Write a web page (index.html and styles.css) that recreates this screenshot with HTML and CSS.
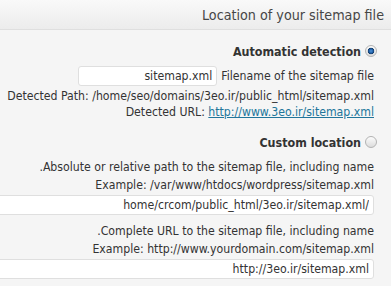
FILE: index.html
```html
<!DOCTYPE html>
<html lang="en" dir="rtl">
<head>
    <meta charset="UTF-8">
    <title>Sitemap location</title>
    <link rel="stylesheet" href="styles.css">
</head>
<body>
    <div class="postbox">
        <h3 class="hndle">Location of your sitemap file</h3>

        <div class="inside">
            <div class="option">
                <label class="option-title"><input type="radio" name="location" checked> Automatic detection</label>
                <div class="input-row">Filename of the sitemap file <input type="text" class="small-text" value="sitemap.xml"></div>
                <div class="row" dir="ltr">Detected Path: /home/seo/domains/3eo.ir/public_html/sitemap.xml</div>
                <div class="row" dir="ltr">Detected URL: <a href="#">http://www.3eo.ir/sitemap.xml</a></div>
            </div>

            <div class="option">
                <label class="option-title"><input type="radio" name="location"> Custom location</label>
                <div class="desc">Absolute or relative path to the sitemap file, including name.</div>
                <div class="desc">Example: /var/www/htdocs/wordpress/sitemap.xml</div>
                <input type="text" class="wide" value="/home/crcom/public_html/3eo.ir/sitemap.xml">

                <div class="desc spaced">Complete URL to the sitemap file, including name.</div>
                <div class="desc">Example: http://www.yourdomain.com/sitemap.xml</div>
                <input type="text" class="wide" value="http://3eo.ir/sitemap.xml">
            </div>
        </div>
    </div>
</body>
</html>
```

FILE: styles.css
```css
body {
    margin: 0;
    overflow: hidden;
    background-color: #f5f5f5;
    font-family: "DejaVu Sans Condensed", "DejaVu Sans", sans-serif;
    font-size: 12.2px;
    color: #333;
}

.postbox {
    direction: rtl;
}

.hndle {
    margin: 0;
    height: 29px;
    line-height: 30px;
    padding: 0 7px;
    font-size: 14.2px;
    font-weight: normal;
    color: #464646;
    background: linear-gradient(to bottom, #f9f9f9, #ececec);
    border-bottom: 1px solid #dfdfdf;
}

.inside {
    padding: 13px 17px 0 0;
}

.option + .option {
    margin-top: 14px;
}

.option-title {
    display: flex;
    align-items: center;
    gap: 4px;
    height: 16px;
    font-weight: bold;
    font-size: 12.4px;
    color: #333;
    margin-right: -3px;
}

/* radio drawn like the old wp-admin one */
.option-title input {
    appearance: none;
    -webkit-appearance: none;
    width: 12px;
    height: 12px;
    margin: 0;
    border: 1px solid #b3b3b3;
    border-radius: 50%;
    background: linear-gradient(to bottom, #fcfcfc, #dcdcdc);
    box-sizing: border-box;
}

.option-title input:checked {
    background:
        radial-gradient(circle, #4f94d8 0, #1d5ea8 2px, #163a63 3px, transparent 3.6px),
        linear-gradient(to bottom, #fcfcfc, #dcdcdc);
}

.option-title + .input-row {
    margin-top: 7px;
}

.input-row {
    display: flex;
    align-items: center;
    gap: 4px;
    height: 20px;
    margin-bottom: 2px;
}

.row {
    line-height: 16px;
    direction: ltr;
    text-align: right;
}

.desc {
    line-height: 18px;
}

.option-title + .desc {
    margin-top: 8px;
}

.spaced {
    margin-top: 7px;
}

a {
    color: #21759b;
}

input[type="text"] {
    box-sizing: border-box;
    height: 20px;
    padding: 0 4px;
    border: 1px solid #dfdfdf;
    border-radius: 3px;
    background: #fff;
    font: inherit;
    color: #333;
    direction: rtl;
}

.small-text {
    width: 139px;
}

.wide {
    display: block;
    width: 420px;
    height: 19px;
    margin-top: 1px;
}
```
